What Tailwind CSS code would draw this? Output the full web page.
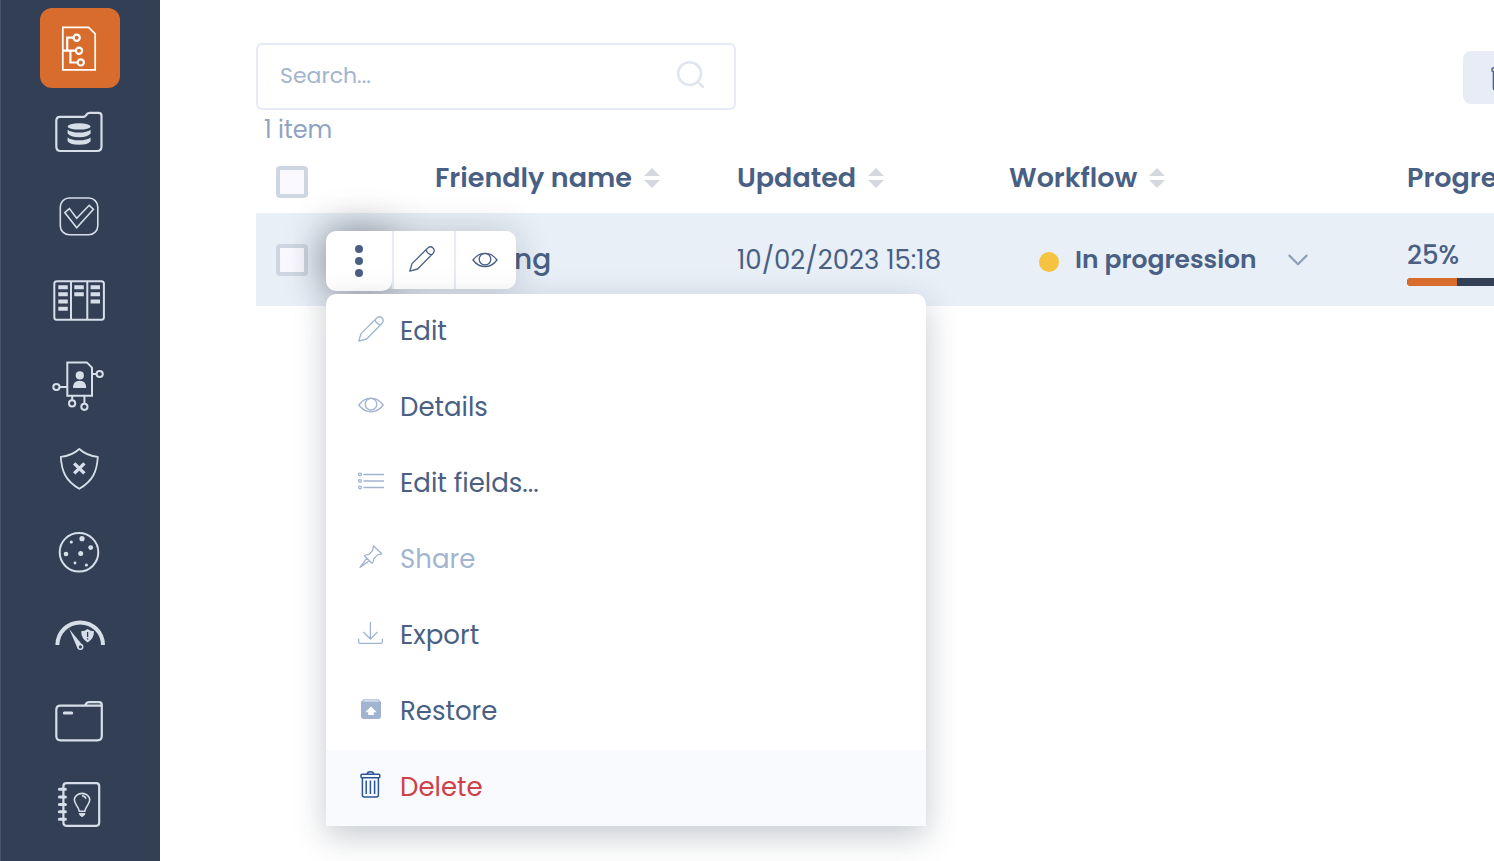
<!DOCTYPE html>
<html lang="en">
<head>
<meta charset="utf-8">
<meta name="viewport" content="width=device-width, initial-scale=1">
<title>Items</title>
<script src="https://cdn.jsdelivr.net/npm/@tailwindcss/browser@4"></script>
</head>
<body class="flex min-h-screen overflow-x-hidden bg-white font-[Poppins,Inter,sans-serif] text-[#4a5f84]">

<nav aria-label="Main" class="flex w-40 shrink-0 flex-col items-center gap-1 border-l border-[#45536b] bg-[#323f55] pt-2 pr-px text-[#d6deea]">
  <a href="#" aria-label="Structure" aria-current="page" class="size-20 rounded-xl bg-[#d86c2d] text-white">
    <svg viewBox="0 0 80 80" class="size-20" fill="none" stroke="currentColor" stroke-width="1.7">
      <path d="M22.8 19.4H48.6L55.2 25.8V61.8H22.8Z"/>
      <g stroke-width="2.2"><path d="M33.5 29.7H27.2V42.7M23 42.7H35.8M30.4 42.7V54.5H37.5"/><circle cx="36.7" cy="29.7" r="3.1"/><circle cx="39" cy="42.7" r="3.1"/><circle cx="40.8" cy="54.4" r="3.1"/></g>
    </svg>
  </a>
  <a href="#" aria-label="Data" class="size-20">
    <svg viewBox="0 0 80 80" class="size-20" fill="none" stroke="currentColor" stroke-width="2.2">
      <path d="M20 24.8H43.5Q45 24.8 46 23.3L47 22Q48 20.8 49.5 20.8H58.5Q61.5 20.8 61.5 23.8V54.5Q61.5 59 57 59H20.5Q16.3 59 16.3 54.5V29Q16.3 24.8 20 24.8Z"/>
      <g fill="currentColor" stroke="none"><ellipse cx="39.1" cy="34.4" rx="11.5" ry="3.2"/><path d="M27.6 37.8Q31 40.6 39.1 40.6T50.6 37.8V41.5Q48 45.2 39.1 45.2T27.6 41.5ZM27.6 45.4Q31 48.2 39.1 48.2T50.6 45.4V49.2Q48 52.8 39.1 52.8T27.6 49.2Z"/></g>
    </svg>
  </a>
  <a href="#" aria-label="Tasks" class="size-20">
    <svg viewBox="0 0 80 80" class="size-20" fill="none" stroke="currentColor" stroke-width="1.6">
      <rect x="20.3" y="22" width="37.5" height="36.7" rx="9"/>
      <path d="M24.8 36.6L29.4 32.6L36.7 42.3L49.2 29.3L53.4 33.2L36.7 51.8Z"/>
    </svg>
  </a>
  <a href="#" aria-label="Boards" class="size-20">
    <svg viewBox="0 0 80 80" class="size-20" fill="none" stroke="currentColor" stroke-width="2">
      <rect x="14.3" y="21.2" width="49.6" height="38.6" rx="2.5"/><path d="M31 21V60M47.3 21V60"/>
      <path stroke-width="4" d="M18.3 27.3H27.8M18.3 34.3H27.8M18.3 41.5H27.8M18.3 48.8H27.8M34.3 27.3H43.8M34.3 34.3H43.8M50.6 27.3H60M50.6 34.3H60M50.6 41.5H60"/>
    </svg>
  </a>
  <a href="#" aria-label="People" class="size-20">
    <svg viewBox="0 0 80 80" class="size-20" fill="none" stroke="currentColor" stroke-width="2">
      <path d="M27.3 18.4H46.8L52 23.6V51.7H27.3Z"/>
      <g><path d="M51.5 30H56.5M19.5 43H28M32.2 51V56M44.4 51V59.4"/><circle cx="59.7" cy="30" r="3.1"/><circle cx="16.4" cy="43" r="3.1"/><circle cx="32.1" cy="59.4" r="3.1"/><circle cx="44.4" cy="62.8" r="3.1"/></g>
      <g fill="currentColor" stroke="none"><circle cx="39.8" cy="31.4" r="4.1"/><path d="M33 44Q33 36.8 39.6 36.8T46.2 44Z"/></g>
    </svg>
  </a>
  <a href="#" aria-label="Risks" class="size-20">
    <svg viewBox="0 0 80 80" class="size-20" fill="none" stroke="currentColor" stroke-width="1.8" stroke-linejoin="round">
      <path d="M39.3 21C34 25.8 28 28.2 20.8 28.8C21.6 43.5 25.5 52.5 39.3 60.8C53.1 52.5 57 43.5 57.8 28.8C50.6 28.2 44.6 25.8 39.3 21Z"/>
      <path stroke-width="3.4" d="M34.2 35.4L44.4 45.4M44.4 35.4L34.2 45.4"/>
    </svg>
  </a>
  <a href="#" aria-label="Mapping" class="size-20">
    <svg viewBox="0 0 80 80" class="size-20" fill="currentColor">
      <circle cx="39" cy="40.3" r="19.3" fill="none" stroke="currentColor" stroke-width="2"/>
      <circle cx="42" cy="26.7" r="2.6"/><circle cx="31.3" cy="30" r="1.6"/><circle cx="50.7" cy="35.6" r="2.4"/><circle cx="26" cy="42" r="2.3"/><circle cx="40.7" cy="41.4" r="2.5"/><circle cx="35" cy="51" r="1.4"/><circle cx="46.4" cy="53" r="1.6"/>
    </svg>
  </a>
  <a href="#" aria-label="Dashboard" class="size-20">
    <svg viewBox="0 0 80 80" class="size-20" fill="none" stroke="currentColor">
      <path stroke-width="4" d="M17.4 49A22.8 22.6 0 0 1 63 49"/>
      <path fill="currentColor" stroke="none" d="M29.2 33L43 49.8L37.6 52.6Z"/><circle cx="40.4" cy="50.9" r="2.3" fill="#323f55" stroke-width="1.5"/>
      <path fill="currentColor" stroke="none" d="M47.6 33Q50.5 35.2 54 35.3Q54 43 47.6 46.4Q41.2 43 41.2 35.3Q44.7 35.2 47.6 33Z"/><path stroke="#323f55" stroke-width="1.3" d="M47.6 36V41M47.6 42.2V43.6"/>
    </svg>
  </a>
  <a href="#" aria-label="Files" class="size-20">
    <svg viewBox="0 0 80 80" class="size-20" fill="none" stroke="currentColor" stroke-width="2.2">
      <path d="M20.5 25.7H61.8V56Q61.8 60.3 57.5 60.3H20.5Q16.3 60.3 16.3 56V30Q16.3 25.7 20.5 25.7ZM44.8 25.7L46.2 23.5Q47.2 22.1 49 22.1H59Q61.8 22.1 61.8 24.8V26"/>
      <path stroke-width="3" stroke-linecap="round" d="M24.3 33H31.7"/>
    </svg>
  </a>
  <a href="#" aria-label="Ideas" class="size-20">
    <svg viewBox="0 0 80 80" class="size-20" fill="none" stroke="currentColor" stroke-width="2.2">
      <rect x="23.4" y="19.2" width="35.8" height="42.6" rx="3"/>
      <path stroke-width="3" stroke-linecap="round" d="M19.4 25.3H25.4M19.4 33H25.4M19.4 40.4H25.4M19.4 47.8H25.4M19.4 55.2H25.4"/>
      <path stroke-width="1.6" d="M39.3 47.2C38.5 42.3 34.3 40.3 34.3 35.6A7.8 7 0 0 1 49.8 35.6C49.8 40.3 45.6 42.3 44.8 47.2ZM42 31.8Q45 32 46 34.8"/>
      <path fill="currentColor" stroke="none" d="M38.8 49H45.4L44.8 51L42.1 53.2L39.4 51Z"/>
    </svg>
  </a>
</nav>

<main class="min-w-0 flex-1 overflow-hidden pt-[43px] pl-24">
  <div class="-mr-[53px]">
    <div class="flex items-center justify-between">
      <form role="search" class="flex h-[67px] w-[480px] items-center rounded-md border-2 border-[#e6eaf6] pr-7 pb-0.5 pl-[22px]">
        <input type="search" aria-label="Search" placeholder="Search..." class="min-w-0 flex-1 text-[22px] leading-8 outline-none placeholder:text-[#a3b4ce]">
        <button type="button" aria-label="Run search" class="text-[#e0e5ee]">
          <svg viewBox="0 0 32 32" class="size-8" fill="none" stroke="currentColor" stroke-width="2.6" stroke-linecap="round"><circle cx="15.6" cy="13.6" r="11.4"/><path d="M23.8 21.8L29 26.8"/></svg>
        </button>
      </form>
      <button type="button" aria-label="Delete selected" class="mt-0.5 flex h-[53px] w-[84px] items-center justify-center rounded-lg bg-[#e7ecf6]">
        <svg viewBox="0 0 28 28" class="size-7" fill="none" stroke="currentColor" stroke-width="1.4"><rect x="1" y="4" width="26" height="3.4" rx="1"/><path d="M2.4 7.4V24Q2.4 26 4.4 26H23.6Q25.6 26 25.6 24V7.4M10 4V2H18V4M9 10.5V23M14 10.5V23M19 10.5V23"/></svg>
      </button>
    </div>
    <p class="pl-2 text-2xl leading-10 text-[#8fa3c3]">1 item</p>

    <table class="w-full table-fixed border-collapse text-left text-[26px] leading-9 whitespace-nowrap">
      <colgroup><col class="w-[179px]"><col class="w-[302px]"><col class="w-[272px]"><col class="w-[398px]"><col></colgroup>
      <thead class="text-[27px]">
        <tr class="h-[63px]">
          <th class="p-0 pl-5"><input type="checkbox" aria-label="Select all" class="block size-8 appearance-none rounded-sm border-4 border-[#cdd6e2] bg-[#faf9ff] checked:bg-[#4a5f84]"></th>
          <th class="p-0 pb-2 font-semibold"><button type="button" class="flex items-center gap-3">Friendly name <svg viewBox="0 0 16 20" class="h-5 w-4 fill-[#d6d8e0]"><path d="M8 0L16 8H0ZM8 20L16 12H0Z"/></svg></button></th>
          <th class="p-0 pb-2 font-semibold"><button type="button" class="flex items-center gap-3">Updated <svg viewBox="0 0 16 20" class="h-5 w-4 fill-[#d6d8e0]"><path d="M8 0L16 8H0ZM8 20L16 12H0Z"/></svg></button></th>
          <th class="p-0 pb-2 font-semibold"><button type="button" class="flex items-center gap-3">Workflow <svg viewBox="0 0 16 20" class="h-5 w-4 fill-[#d6d8e0]"><path d="M8 0L16 8H0ZM8 20L16 12H0Z"/></svg></button></th>
          <th class="p-0 pb-2 font-semibold">Progress</th>
        </tr>
      </thead>
      <tbody>
        <tr class="h-[93px] bg-[#e8eff7]">
          <td class="relative p-0 pl-5">
            <input type="checkbox" aria-label="Select item" class="block size-8 appearance-none rounded-sm border-4 border-[#cdd6e2] bg-[#faf9ff] checked:bg-[#4a5f84]">
            <div class="absolute top-[18px] left-[70px] z-10">
              <div class="flex h-[58px] w-[190px] rounded-[10px] shadow-[0_0_34px_rgba(40,50,65,0.22)]">
                <button type="button" aria-label="More actions" aria-expanded="true" class="flex h-[60px] w-[66px] items-center justify-center rounded-l-[10px] rounded-br-[10px] bg-white shadow-[0_0_40px_rgba(30,40,50,0.42)]">
                  <svg viewBox="0 0 8 32" class="h-8 w-2" fill="currentColor"><circle cx="4" cy="4" r="4"/><circle cx="4" cy="16" r="4"/><circle cx="4" cy="28" r="4"/></svg>
                </button>
                <button type="button" aria-label="Edit item" class="relative flex w-[62px] items-center justify-center border-l-2 border-[#e6ebf6] bg-white pr-1 pb-0.5">
                  <svg viewBox="0 0 26 26" class="size-[26px]" fill="none" stroke="currentColor" stroke-width="1.3" stroke-linejoin="round"><path d="M.8 25.2L3 17.6L18.8 2Q21.6 -.4 24 2T24.2 7.2L8.6 23ZM17.2 3.6Q18 8 22.6 8.8M3 17.6L3.4 17.2"/></svg>
                </button>
                <button type="button" aria-label="View item" class="relative flex w-[62px] items-center justify-center rounded-r-[10px] border-l-2 border-[#e6ebf6] bg-white pr-[3px]">
                  <svg viewBox="0 0 26 16" class="h-4 w-[26px]" fill="none" stroke="currentColor" stroke-width="1.3"><path d="M1 8Q6 1.4 13 1.4T25 8Q20 14.6 13 14.6T1 8Z"/><circle cx="13" cy="7.2" r="5.8"/></svg>
                </button>
              </div>
              <ul role="menu" class="relative mt-[5px] w-[600px] overflow-hidden rounded-t-[10px] bg-white text-[#4a5f84] shadow-[0_10px_32px_rgba(40,55,75,0.27)]">
                <li role="none"><button role="menuitem" type="button" class="flex h-[76px] w-full items-center gap-4 pb-0.5 pl-8">
                  <svg viewBox="0 0 26 26" class="mb-1 size-[26px] text-[#a0b3d0]" fill="none" stroke="currentColor" stroke-width="1.3" stroke-linejoin="round"><path d="M.8 25.2L3 17.6L18.8 2Q21.6 -.4 24 2T24.2 7.2L8.6 23ZM17.2 3.6Q18 8 22.6 8.8"/></svg>Edit</button></li>
                <li role="none"><button role="menuitem" type="button" class="flex h-[76px] w-full items-center gap-4 pb-0.5 pl-8">
                  <svg viewBox="0 0 26 26" class="mb-1 size-[26px] text-[#a0b3d0]" fill="none" stroke="currentColor" stroke-width="1.3"><path d="M.8 13Q6 6.2 13 6.2T25.2 13Q20 19.8 13 19.8T.8 13Z"/><circle cx="13" cy="12.2" r="5.8"/></svg>Details</button></li>
                <li role="none"><button role="menuitem" type="button" class="flex h-[76px] w-full items-center gap-4 pb-0.5 pl-8">
                  <svg viewBox="0 0 26 26" class="mb-1 size-[26px] text-[#a0b3d0]" fill="none" stroke="currentColor" stroke-width="1.3"><circle cx="2" cy="6.5" r="1.4"/><circle cx="2" cy="13" r="1.4"/><circle cx="2" cy="19.5" r="1.4"/><path d="M5.4 6.5H26M5.4 13H26M5.4 19.5H26"/></svg>Edit fields...</button></li>
                <li role="none"><button role="menuitem" type="button" aria-disabled="true" class="flex h-[76px] w-full items-center gap-4 pb-0.5 pl-8 text-[#a3b4ce]">
                  <svg viewBox="0 0 26 26" class="mb-1 size-[26px] text-[#a0b3d0]" fill="none" stroke="currentColor" stroke-width="1.3" stroke-linejoin="round"><path d="M15.4 1.8L23.8 9.8L21.6 10.4Q20 9.6 15.8 14.6Q15.8 17.4 14.2 19.4L6.4 11.8Q8.6 10 11 10.4Q15.8 6 15 3.8ZM8.9 14.2L2 23.4L11.4 16.7"/></svg>Share</button></li>
                <li role="none"><button role="menuitem" type="button" class="flex h-[76px] w-full items-center gap-4 pb-0.5 pl-8">
                  <svg viewBox="0 0 26 26" class="mb-1 size-[26px] text-[#a0b3d0]" fill="none" stroke="currentColor" stroke-width="1.3"><path d="M12.4 2V19M5.4 12L12.4 19L19.4 12M.7 18.8V22Q.7 23.4 2 23.4H23Q24.4 23.4 24.4 22V18.8"/></svg>Export</button></li>
                <li role="none"><button role="menuitem" type="button" class="flex h-[76px] w-full items-center gap-4 pb-0.5 pl-8">
                  <svg viewBox="0 0 26 26" class="mb-1 size-[26px] text-[#a0b3d0]"><path fill="currentColor" d="M5.4 3.2H20.6L23 6V20.6Q23 23 20.6 23H5.4Q3 23 3 20.6V6Z"/><path fill="#d3dce9" d="M6 3.8H20L21.3 5.8H4.7Z"/><path fill="#fff" d="M13 10.6L18.8 16.2H15.8V19H10.2V16.2H7.2Z"/></svg>Restore</button></li>
                <li role="none"><button role="menuitem" type="button" class="flex h-[76px] w-full items-center gap-4 bg-[#f9fafe] pb-0.5 pl-8 text-[#cd4148]">
                  <svg viewBox="0 0 26 28" class="mb-1.5 h-7 w-[26px] text-[#2c5593]" fill="none" stroke="currentColor" stroke-width="1.5"><rect x="3" y="4.2" width="18.8" height="3.6" rx="1"/><path d="M9.2 4.2Q9.2 1.8 12.4 1.8T15.6 4.2M4.4 7.8V25Q4.4 27 6.4 27H18.4Q20.4 27 20.4 25V7.8M8.2 10.6V24M12.4 10.6V24M16.6 10.6V24"/></svg>Delete</button></li>
              </ul>
            </div>
          </td>
          <td class="p-0 pl-[79px] text-[28px] font-medium">ng</td>
          <td class="p-0">10/02/2023 15:18</td>
          <td class="p-0">
            <button type="button" aria-haspopup="listbox" class="flex items-center pl-[30px] text-[25px] font-semibold">
              <span class="mt-1 size-5 rounded-full bg-[#f5c242]"></span>
              <span class="w-[229px] pl-4 text-left">In progression</span>
              <svg viewBox="0 0 20 12" class="h-3 w-5 text-[#8da0bd]" fill="none" stroke="currentColor" stroke-width="2.2" stroke-linecap="round" stroke-linejoin="round"><path d="M1.4 1.6L10 10.2L18.6 1.6"/></svg>
            </button>
          </td>
          <td class="p-0 pt-1">
            <div class="flex flex-col gap-[5px] font-medium">
              <span class="leading-9">25%</span>
              <div role="progressbar" aria-label="Progress" aria-valuenow="25" aria-valuemin="0" aria-valuemax="100" class="h-2 w-[200px] overflow-hidden rounded-sm bg-[#323f55]"><div class="h-full bg-[#d86c2d]" style="width:25%"></div></div>
            </div>
          </td>
        </tr>
      </tbody>
    </table>
  </div>
</main>
</body>
</html>
